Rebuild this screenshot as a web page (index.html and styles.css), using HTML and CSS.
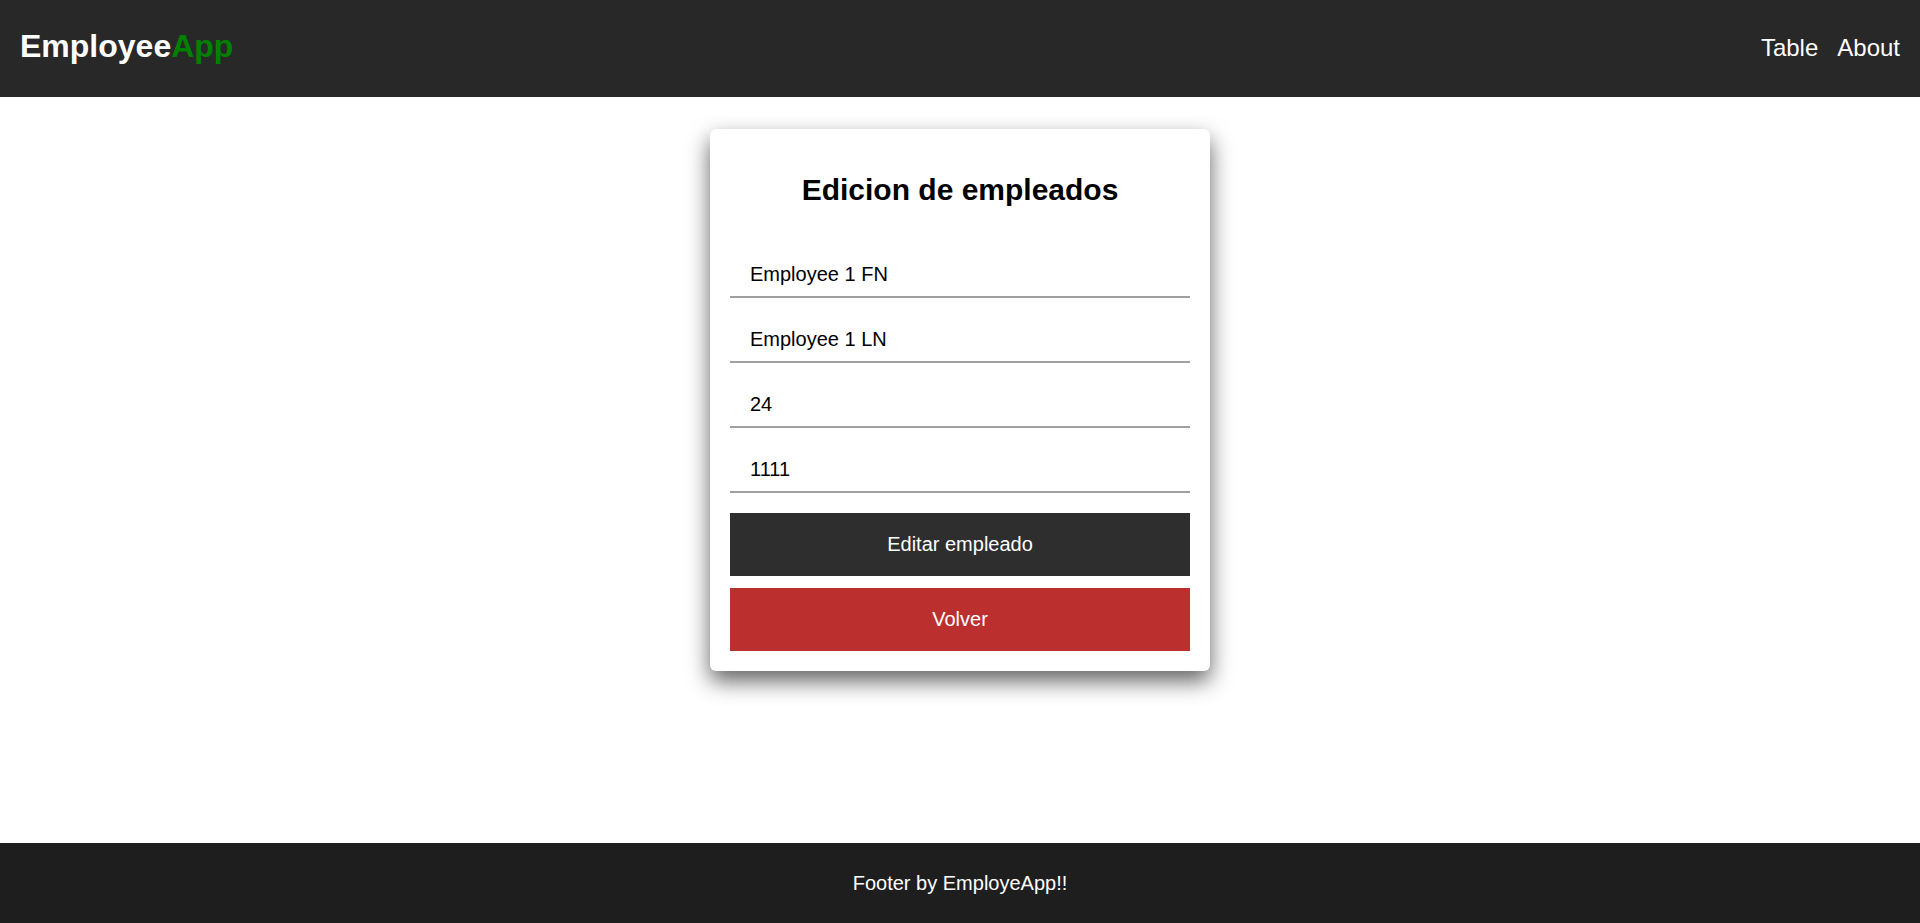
FILE: index.html
```html
<!DOCTYPE html>
<html lang="es">
<head>
<meta charset="utf-8">
<title>EmployeeApp</title>
<link rel="stylesheet" href="styles.css">
</head>
<body>
<header class="topbar">
  <a class="brand" href="#">Employee<span class="brand-accent">App</span></a>
  <nav class="nav">
    <a class="nav-link" href="#">Table</a>
    <a class="nav-link" href="#">About</a>
  </nav>
</header>
<main class="main">
  <section class="card">
    <h2 class="card-title">Edicion de empleados</h2>
    <form class="form">
      <input class="field" type="text" value="Employee 1 FN">
      <input class="field" type="text" value="Employee 1 LN">
      <input class="field" type="text" value="24">
      <input class="field" type="text" value="1111">
      <button class="btn btn-dark" type="button">Editar empleado</button>
      <button class="btn btn-red" type="button">Volver</button>
    </form>
  </section>
</main>
<footer class="footer">Footer by EmployeApp!!</footer>
</body>
</html>
```
FILE: styles.css
```css
* { box-sizing: border-box; }
html, body { margin: 0; padding: 0; }
body {
  min-height: 100vh;
  display: flex;
  flex-direction: column;
  font-family: "Liberation Sans", Arial, sans-serif;
  background: #ffffff;
  color: #000;
}
.topbar {
  height: 97px;
  background: #282828;
  display: flex;
  align-items: center;
  justify-content: space-between;
  padding: 0 20px 4px 20px;
}
.brand {
  font-size: 32px;
  font-weight: bold;
  color: #ffffff;
  text-decoration: none;
  line-height: 37px;
}
.brand-accent { color: #008000; }
.nav { display: flex; gap: 19px; padding-top: 2px; }
.nav-link {
  color: #ffffff;
  text-decoration: none;
  font-size: 24px;
  line-height: 27px;
}
.main {
  flex: 1;
  display: flex;
  justify-content: center;
  align-items: flex-start;
  padding-top: 32px;
}
.card {
  width: 500px;
  background: #fff;
  border-radius: 6px;
  padding: 20px;
  box-shadow: 0 10px 22px rgba(0, 0, 0, 0.62);
}
.card-title {
  margin: 24px 0 46px;
  font-size: 30px;
  line-height: 34px;
  font-weight: bold;
  text-align: center;
}
.form { display: flex; flex-direction: column; }
.field {
  height: 45px;
  margin: 0 0 20px 0;
  padding: 10px 10px 10px 20px;
  border: none;
  border-bottom: 2px solid #a0a0a0;
  font-family: "Liberation Sans", Arial, sans-serif;
  font-size: 20px;
  line-height: 23px;
  color: #000;
  background: #fff;
  outline: none;
}
.btn {
  height: 63px;
  border: none;
  border-radius: 0;
  color: #fff;
  font-family: "Liberation Sans", Arial, sans-serif;
  font-size: 20px;
  cursor: pointer;
}
.btn-dark { background: #2e2e2e; margin-bottom: 12px; }
.btn-red { background: #bb2f2f; }
.footer {
  height: 80px;
  background: #1e1e1e;
  color: #fff;
  font-size: 20px;
  display: flex;
  align-items: center;
  justify-content: center;
}
```
